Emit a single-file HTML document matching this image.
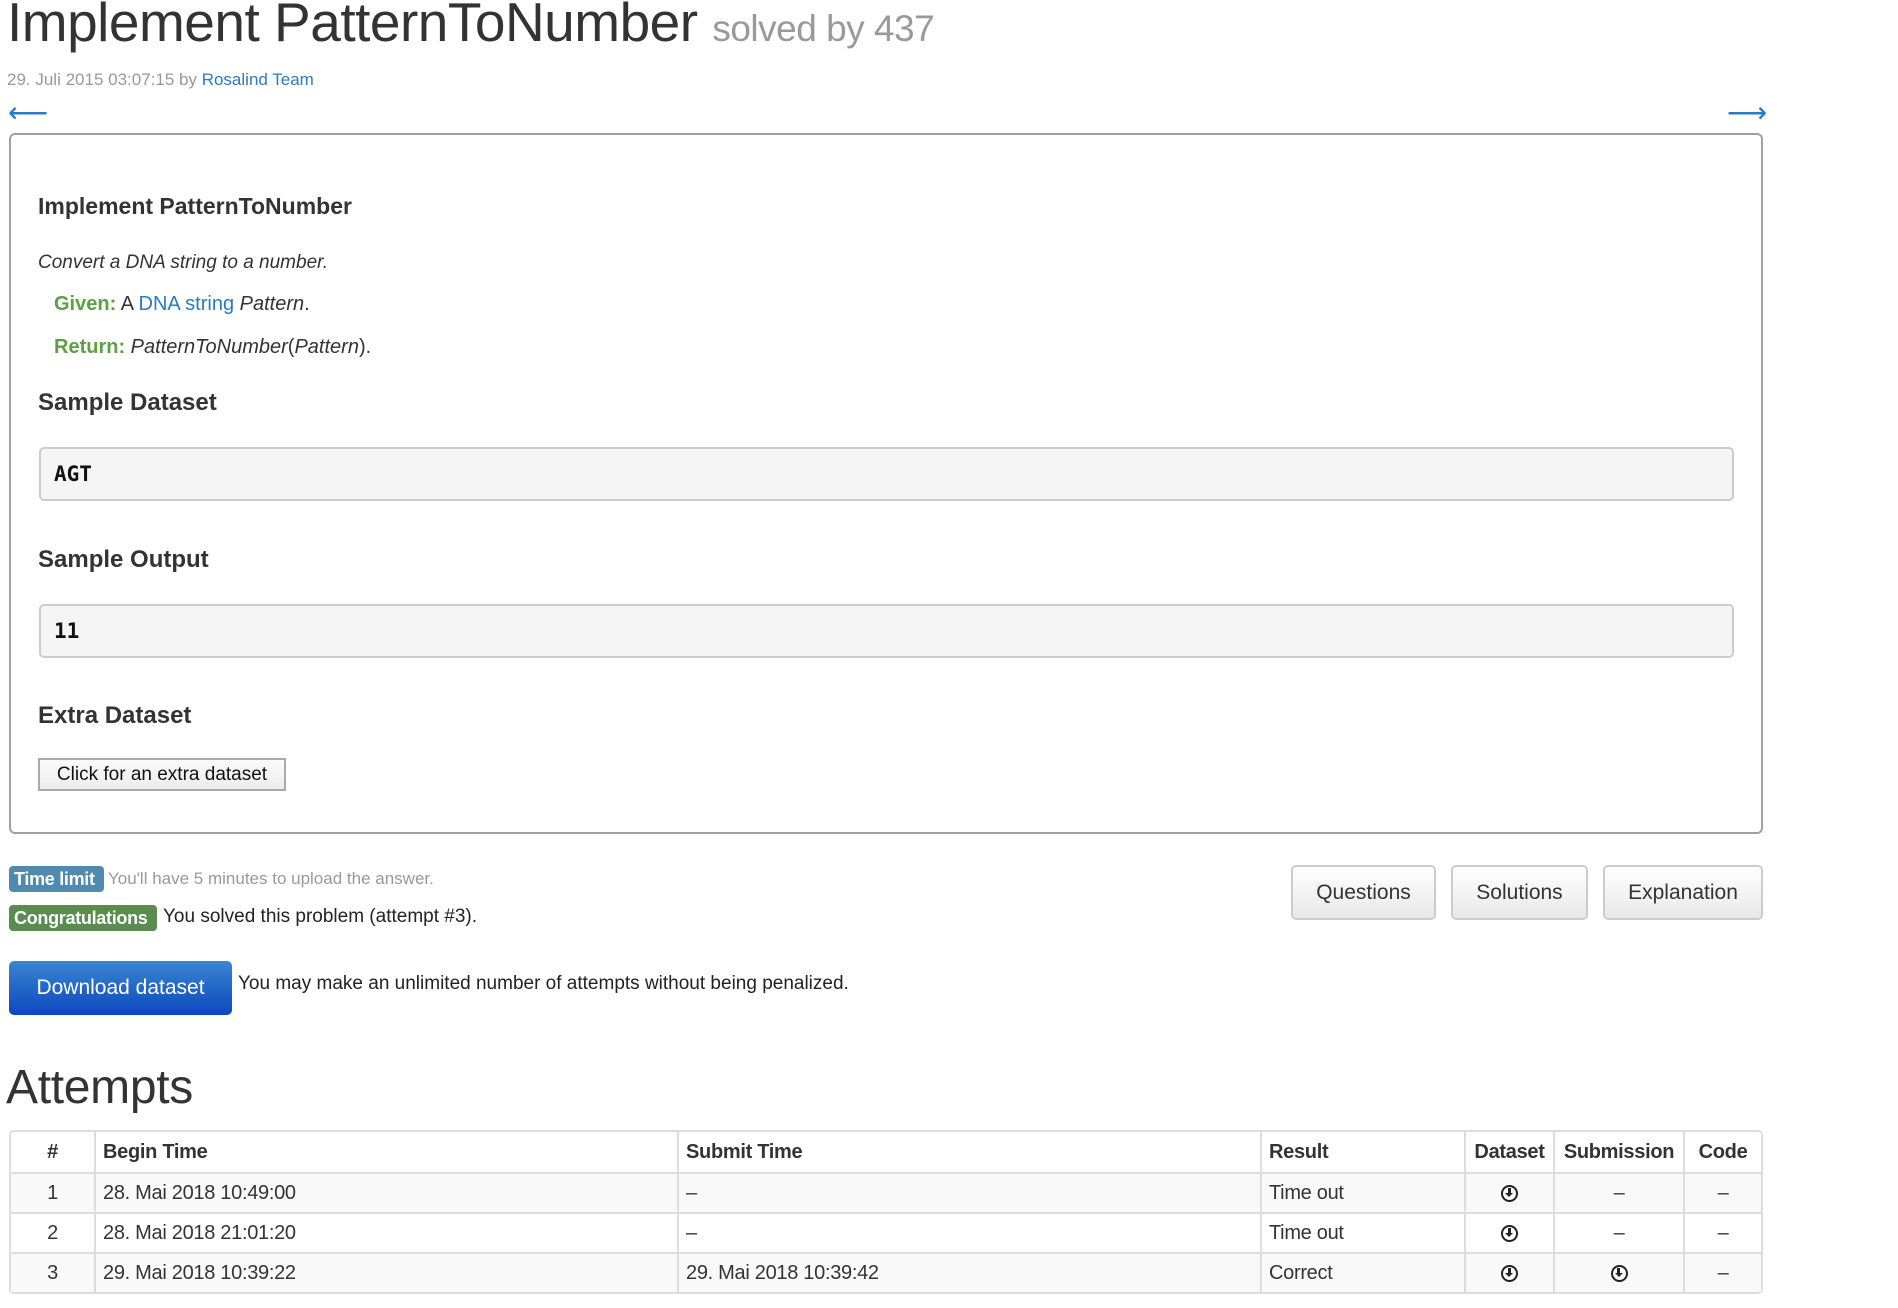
<!DOCTYPE html>
<html><head><meta charset="utf-8"><style>
*{margin:0;padding:0;box-sizing:border-box}
body{width:1898px;height:1308px;background:#fff;font-family:"Liberation Sans",Arial,sans-serif;color:#333;position:relative;overflow:hidden}
.a{position:absolute;white-space:nowrap}
a{color:#2a7ac6;text-decoration:none}
.box{position:absolute;left:9px;top:133px;width:1754px;height:701px;border:2px solid #a0a0a0;border-radius:6px}
.h{font-weight:bold;color:#333}
.pre{position:absolute;left:39px;width:1695px;height:54px;background:#f5f5f5;border:2px solid #ccc;border-radius:5px;font-family:"DejaVu Sans Mono","Liberation Mono",monospace;font-weight:bold;font-size:21px;color:#111;padding-left:13px;line-height:50px}
.lbl{position:absolute;height:26px;border-radius:4px;color:#fff;font-weight:bold;font-size:18px;line-height:26px;padding:0 5px;letter-spacing:-0.3px}
.btn{position:absolute;top:865px;height:55px;border:2px solid #ccc;border-radius:5px;background:linear-gradient(#fff,#e8e8e8);font-size:21px;line-height:51px;text-align:center;color:#333}
table{position:absolute;left:9px;top:1130px;width:1754px;border-collapse:separate;border-spacing:0;border:2px solid #ddd;border-radius:5px;font-size:20px}
td,th{height:40px;border-left:2px solid #ddd;border-top:2px solid #ddd;padding:0 7px;text-align:left;letter-spacing:-0.3px}
th{border-top:none;font-weight:bold}
tr td:first-child,tr th:first-child{border-left:none;text-align:center}
tr.o td{background:#f9f9f9}
.c{text-align:center!important}
.ic{display:inline-block;width:17px;height:17px;border:2.5px solid #222;border-radius:50%;position:relative;vertical-align:middle}
.ic:after{content:"";position:absolute;left:4.5px;top:1.5px;width:3px;height:5px;background:#222}
.ic:before{content:"";position:absolute;left:2px;top:6px;border-left:4px solid transparent;border-right:4px solid transparent;border-top:4.5px solid #222}
</style></head><body>
<div class="a" style="left:7px;top:-10px;font-size:55px;color:#333;letter-spacing:-0.5px">Implement PatternToNumber <span style="font-size:37px;color:#999">solved by 437</span></div>
<div class="a" style="left:7px;top:70px;font-size:17px;color:#999">29. Juli 2015 03:07:15 by <a>Rosalind Team</a></div>
<div class="a" style="left:8px;top:96px;font-size:28px;color:#2a7ac6">⟵</div>
<div class="a" style="left:1727px;top:96px;font-size:28px;color:#2a7ac6">⟶</div>
<div class="box"></div>
<div class="a h" style="left:38px;top:193px;font-size:23px">Implement PatternToNumber</div>
<div class="a" style="left:38px;top:252px;font-size:19px;font-style:italic">Convert a DNA string to a number.</div>
<div class="a" style="left:54px;top:293px;font-size:20px"><b style="color:#5aa143">Given:</b> A <a>DNA string</a> <i>Pattern</i>.</div>
<div class="a" style="left:54px;top:336px;font-size:20px"><b style="color:#5aa143">Return:</b> <i>PatternToNumber</i>(<i>Pattern</i>).</div>
<div class="a h" style="left:38px;top:389px;font-size:24px">Sample Dataset</div>
<div class="pre" style="top:447px">AGT</div>
<div class="a h" style="left:38px;top:546px;font-size:24px">Sample Output</div>
<div class="pre" style="top:604px">11</div>
<div class="a h" style="left:38px;top:702px;font-size:24px">Extra Dataset</div>
<div class="a" style="left:38px;top:758px;width:248px;height:33px;border:2px solid #aaa;background:linear-gradient(#fafafa,#ececec);font-size:19px;line-height:29px;text-align:center;color:#111">Click for an extra dataset</div>
<div class="lbl" style="left:9px;top:866px;width:95px;background:#4f8ab0">Time limit</div>
<div class="a" style="left:108px;top:869px;font-size:17px;color:#999">You'll have 5 minutes to upload the answer.</div>
<div class="lbl" style="left:9px;top:905px;width:148px;background:#5a8b4f">Congratulations</div>
<div class="a" style="left:163px;top:906px;font-size:19px;color:#222">You solved this problem (attempt #3).</div>
<div class="btn" style="left:1291px;width:145px">Questions</div>
<div class="btn" style="left:1451px;width:137px">Solutions</div>
<div class="btn" style="left:1603px;width:160px">Explanation</div>
<div class="a" style="left:9px;top:961px;width:223px;height:54px;border-radius:5px;background:linear-gradient(#3a86d0,#0b48c0);color:#fff;font-size:21px;line-height:54px;text-align:center">Download dataset</div>
<div class="a" style="left:238px;top:973px;font-size:19px;color:#222">You may make an unlimited number of attempts without being penalized.</div>
<div class="a" style="left:6px;top:1060px;font-size:48px;color:#333;letter-spacing:-0.3px">Attempts</div>
<table>
<tr><th style="width:83px">#</th><th style="width:583px">Begin Time</th><th style="width:583px">Submit Time</th><th style="width:204px">Result</th><th class="c" style="width:89px">Dataset</th><th class="c" style="width:130px">Submission</th><th class="c">Code</th></tr>
<tr class="o"><td>1</td><td>28. Mai 2018 10:49:00</td><td>–</td><td>Time out</td><td class="c"><span class="ic"></span></td><td class="c">–</td><td class="c">–</td></tr>
<tr><td>2</td><td>28. Mai 2018 21:01:20</td><td>–</td><td>Time out</td><td class="c"><span class="ic"></span></td><td class="c">–</td><td class="c">–</td></tr>
<tr class="o"><td>3</td><td>29. Mai 2018 10:39:22</td><td>29. Mai 2018 10:39:42</td><td>Correct</td><td class="c"><span class="ic"></span></td><td class="c"><span class="ic"></span></td><td class="c">–</td></tr>
</table>
</body></html>
